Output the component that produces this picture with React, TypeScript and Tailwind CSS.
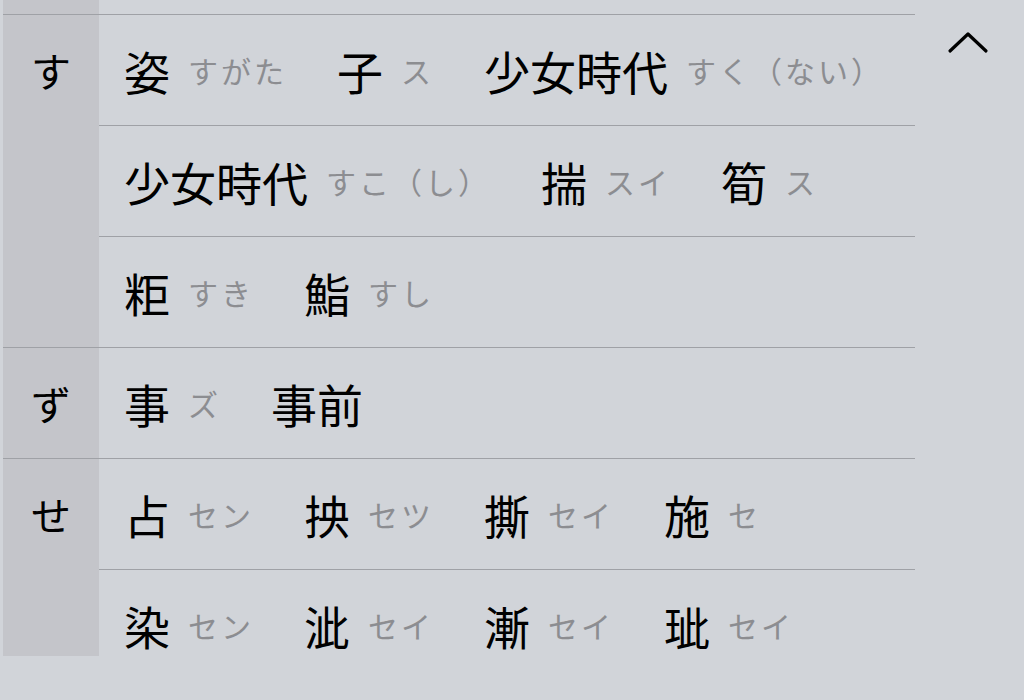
import React from "react";

type Item = { word: string; reading?: string };

const sections: { kana: string; rows: Item[][]; clip?: boolean }[] = [
  {
    kana: "す",
    rows: [
      [
        { word: "姿", reading: "すがた" },
        { word: "子", reading: "ス" },
        { word: "少女時代", reading: "すく（ない）" },
      ],
      [
        { word: "少女時代", reading: "すこ（し）" },
        { word: "揣", reading: "スイ" },
        { word: "筍", reading: "ス" },
      ],
      [
        { word: "粔", reading: "すき" },
        { word: "鮨", reading: "すし" },
      ],
    ],
  },
  {
    kana: "ず",
    rows: [[{ word: "事", reading: "ズ" }, { word: "事前" }]],
  },
  {
    kana: "せ",
    clip: true,
    rows: [
      [
        { word: "占", reading: "セン" },
        { word: "抰", reading: "セツ" },
        { word: "撕", reading: "セイ" },
        { word: "施", reading: "セ" },
      ],
      [
        { word: "染", reading: "セン" },
        { word: "泚", reading: "セイ" },
        { word: "漸", reading: "セイ" },
        { word: "玼", reading: "セイ" },
      ],
    ],
  },
];

function Row({ items, first }: { items: Item[]; first: boolean }) {
  return (
    <div
      className={`flex items-center gap-[50px] pl-[25px] ${
        first ? "h-[110px]" : "h-[111px] border-t border-[#9fa1a6]"
      }`}
    >
      {items.map((it, i) => (
        <div key={i} className="flex items-center gap-[18px]">
          <span className="text-[46px] leading-none text-black">{it.word}</span>
          {it.reading && (
            <span className="text-[30px] leading-none tracking-[3px] text-[#8c8d91]">
              {it.reading}
            </span>
          )}
        </div>
      ))}
    </div>
  );
}

export default function App() {
  return (
    <div
      className="relative h-[700px] w-[1024px] overflow-hidden bg-[#d1d4d9] pl-[3px]"
      style={{ fontFamily: '"Noto Sans CJK JP", sans-serif' }}
    >
      <div className="w-[912px]">
        {/* tail of previous section */}
        <div className="flex h-[14px]">
          <div className="w-[96px] bg-[#c4c5ca]" />
        </div>

        {sections.map((s) => (
          <div key={s.kana} className="flex border-t border-[#9fa1a6]">
            <div
              className={`w-[96px] shrink-0 bg-[#c4c5ca] ${s.clip ? "h-[197px] self-start" : ""}`}
            >
              <div className="flex h-[110px] items-center justify-center text-[40px] leading-none text-black">
                {s.kana}
              </div>
            </div>
            <div className="flex-1">
              {s.rows.map((r, i) => (
                <Row key={i} items={r} first={i === 0} />
              ))}
            </div>
          </div>
        ))}
      </div>

      {/* collapse button */}
      <button className="absolute right-[34px] top-[28px] flex h-[30px] w-[44px] items-center justify-center">
        <svg width="42" height="24" viewBox="0 0 42 24" fill="none">
          <path
            d="M3 20 L21 3 L39 20"
            stroke="#000"
            strokeWidth="3.2"
            strokeLinecap="round"
            strokeLinejoin="round"
          />
        </svg>
      </button>
    </div>
  );
}
